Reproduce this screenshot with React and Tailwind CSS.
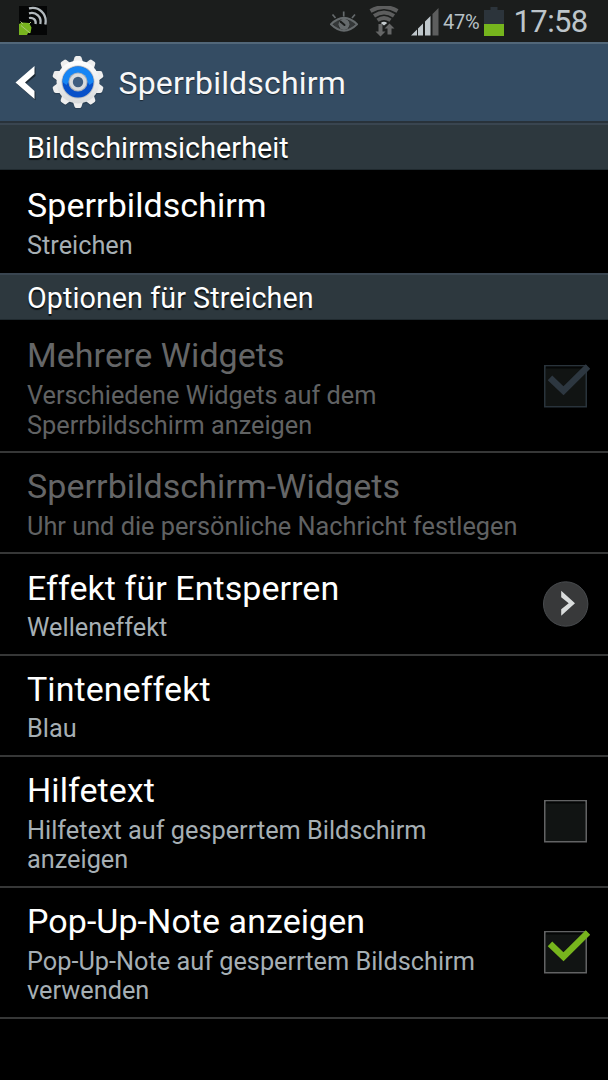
import React from "react";

function SharingIcon() {
  return (
    <svg className="ml-[18px] block h-[30px] w-[30px]" viewBox="0 0 30 30">
      <rect x="1" y="0" width="28" height="29" fill="#050606" />
      <g fill="none" stroke="#b2b9bd" strokeWidth="2.3">
        <path d="M11 2.4C21 0 29.5 8 27.3 18.5" />
        <path d="M11 7.3C18 5.4 24 11 22.3 18" />
        <path d="M11 12C15 11 18.5 14 17.5 18" />
      </g>
      <path d="M1 18 4 16.5l7 .5 2.500 4.500-1 5.500H10l-1 2H1z" fill="#78b51f" />
      <path d="m3 19.500 9 7.500M2.500 15.500 5 18M11 18l2-2" fill="none" stroke="#a9c67c" strokeWidth="1" />
    </svg>
  );
}

function EyeIcon() {
  return (
    <svg className="block h-[24px] w-[28px]" viewBox="0 0 28 24">
      <g fill="none" stroke="#656a6c" strokeWidth="1.700">
        <path d="M13.700 .5V5.500M2.500 3.500 5.500 7M25 3.500 22 7" />
        <path d="M1 13.300Q14 .5 27 13.300 14 26.100 1 13.300z" strokeWidth="2" />
      </g>
      <path d="M3 13.300Q6 9.500 10 8.300q-3.500 5 0 10Q6 17 3 13.300zM25 13.300Q22 9.500 18 8.300q3.500 5 0 10 4-1.300 7-5z" fill="#656a6c" opacity=".35" />
      <circle cx="14" cy="13.300" r="5.600" fill="#656a6c" />
      <path d="m10.500 10.500 4 3.500" stroke="#1b1d1c" strokeWidth="2" strokeLinecap="round" />
    </svg>
  );
}

function WifiIcon() {
  return (
    <svg className="block h-[32px] w-[30px]" viewBox="0 0 30 32">
      <g fill="none" stroke="#5d5e5e" strokeWidth="3.800">
        <path d="M1.500 5Q15-3 28.500 5" />
        <path d="M5 9.800Q15 3.300 25 9.800" />
        <path d="M8.500 14.300Q15 9.800 21.500 14.300" />
      </g>
      <path d="M11.800 17Q15 14.500 18.200 17L15 19.500z" fill="#c5cbce" />
      <path d="M9.500 18h4v7.500h3L11.500 30.500l-5-5h3zM18.500 28.500h4v-6h3L20.500 17.500l-5 5h3z" fill="#656666" />
    </svg>
  );
}

function SignalIcon() {
  return (
    <svg className="block h-[28px] w-[28px]" viewBox="0 0 28 28">
      <path d="M0 27.500 6 21.500v6zM7 20.500l5-5v12H7zM14 13.500l5.500-5.500v19.500h-5.500z" fill="#bfc7cb" />
      <path d="m21.500 6 6-6v27.500h-6z" fill="#5d5e5e" />
    </svg>
  );
}

function BatteryIcon() {
  return (
    <svg className="block h-[29px] w-[20px]" viewBox="0 0 20 29">
      <path d="M6.500 0h7v3H20v14H0V3h6.500z" fill="#2c343b" />
      <path d="M0 17h20v12H0z" fill="#76b51d" />
    </svg>
  );
}

function StatusBar() {
  return (
    <div className="flex h-[42px] bg-[#1b1d1c] pt-[6px]">
      <SharingIcon />
      <div className="ml-[282px] mt-[5px]"><EyeIcon /></div>
      <div className="ml-[11px]"><WifiIcon /></div>
      <div className="ml-[12px] mt-[2px]"><SignalIcon /></div>
      <span className="ml-[4px] mt-[4px] w-[37px] whitespace-nowrap text-[20px] leading-[25px] tracking-[-0.2px] text-[#b8c1c6]">47%</span>
      <div className="ml-[4px] mt-[1px]"><BatteryIcon /></div>
      <span className="ml-[9.500px] -mt-[3px] whitespace-nowrap text-[31px] leading-[38px] tracking-[-0.6px] text-[#bdc5ca]">17:58</span>
    </div>
  );
}

const teeth = [0, 36, 72, 108, 144, 180, 216, 252, 288, 324];

function GearIcon() {
  return (
    <svg className="block h-[54px] w-[54px]" viewBox="-27 -27 54 54">
      <defs>
        <linearGradient id="metal" x1="0" y1="0" x2="0" y2="1">
          <stop offset="0" stopColor="#fff" />
          <stop offset="1" stopColor="#d8dadb" />
        </linearGradient>
      </defs>
      <g transform="translate(0 1)" fill="#26394b" opacity=".6">
        <circle r="22" />
        {teeth.map((a) => <path key={a} d="M-4.800-20-3.300-26H3.300L4.800-20z" transform={`rotate(${a})`} />)}
      </g>
      <g fill="#eeeeee">
        {teeth.map((a) => <path key={a} d="M-5-20-3.500-24.500Q-3-26-1.800-26H1.800Q3-26 3.500-24.500L5-20z" transform={`rotate(${a})`} />)}
      </g>
      <circle r="21.500" fill="url(#metal)" />
      <circle r="16.500" fill="#b8bec4" />
      <circle r="15.500" fill="#0750c9" />
      <path d="M-15.500 0a15.500 15.500 0 0 1 31 0l-4 3Q7-5 0-5T-11.500 3z" fill="#1686f5" />
      <circle r="9.600" fill="#a8b0b7" />
      <circle r="8.500" fill="#d9dcde" />
      <circle r="5.200" fill="#3f5e80" />
    </svg>
  );
}

function ActionBar() {
  return (
    <header className="flex h-[81px] border-b-2 border-t-2 border-b-[#28323a] border-t-[#526779] bg-[#344c63]">
      <svg className="ml-[15px] mt-[22px] block h-[35px] w-[21px]" viewBox="0 0 21 35">
        <path d="M20.500 1.500v8.500L11 17.800l9.500 8v8.500L1.800 18z" fill="#1e2a35" />
        <path d="M19.500 0v8L10 16.500l9.500 8.500V33L.5 16.500z" fill="#fff" />
      </svg>
      <div className="ml-[14.5px] mt-[11px]"><GearIcon /></div>
      <h1 className="ml-[14px] mt-[19px] whitespace-nowrap text-[32px] leading-[40px] tracking-[0.18px] text-[#f7f8f9] [text-shadow:0_1px_1px_#1c2935]">Sperrbildschirm</h1>
    </header>
  );
}

function SectionHeader({ children }) {
  return (
    <h2 className="h-[47px] border-b border-t-2 border-b-[#202a2f] border-t-[#394550] bg-[#2d383e] pl-[27px] pt-[4px] text-[28.7px] leading-[38px] tracking-[0.07px] text-white [text-shadow:0_2px_1px_#0b1012]">{children}</h2>
  );
}

function CheckBox({ checked, disabled }) {
  return (
    <svg className="block h-[48px] w-[50px]" viewBox="0 0 50 48">
      <rect x="4.750" y="5.750" width="41.500" height="41" fill="#111413" stroke={disabled ? "#29333b" : "#626364"} strokeWidth="1.500" />
      <path d="M6 7.500h39" stroke="#050606" strokeWidth="2" />
      {checked && <path d="M10 17.800 23.500 30.800 48 6.500" fill="none" stroke={disabled ? "#2d3740" : "#77b51d"} strokeWidth="6.500" />}
    </svg>
  );
}

function MoreButton() {
  return (
    <svg className="block h-[48px] w-[50px]" viewBox="0 0 50 48">
      <circle cx="25.700" cy="25" r="22.200" fill="#38393a" stroke="#484b4e" strokeWidth="1" />
      <path d="M21.200 11.700v6.500l7.500 6-7.500 6v6.500L35 24.200z" fill="#dadddd" />
    </svg>
  );
}

const rows = [
  { title: "Mehrere Widgets", summary: ["Verschiedene Widgets auf dem", "Sperrbildschirm anzeigen"], disabled: true, control: "check", checked: true, size: "h-[133px]", pad: "pt-[14px]", gap: "mt-[5px]", offset: "mt-[40px]" },
  { title: "Sperrbildschirm-Widgets", summary: ["Uhr und die persönliche Nachricht festlegen"], disabled: true, size: "h-[101px]", pad: "pt-[12px]", gap: "mt-[5px]" },
  { title: "Effekt für Entsperren", summary: ["Welleneffekt"], control: "more", size: "h-[102px]", pad: "pt-[13px]", gap: "mt-[4px]", offset: "mt-[25px]" },
  { title: "Tinteneffekt", summary: ["Blau"], size: "h-[101px]", pad: "pt-[12px]", gap: "mt-[4px]" },
  { title: "Hilfetext", summary: ["Hilfetext auf gesperrtem Bildschirm", "anzeigen"], control: "check", size: "h-[131px]", pad: "pt-[12px]", gap: "mt-[4.5px]", offset: "mt-[38px]" },
  { title: "Pop-Up-Note anzeigen", summary: ["Pop-Up-Note auf gesperrtem Bildschirm", "verwenden"], control: "check", checked: true, size: "h-[131px]", pad: "pt-[12px]", gap: "mt-[4.5px]", offset: "mt-[37.5px]" },
];

function SettingRow({ title, summary, disabled, control, checked, size, pad, gap, offset, last }) {
  return (
    <div className={`${size} flex justify-between pl-[27px] pr-[18px] ${last ? "" : "border-b-2 border-[#363737]"}`}>
      <div className={pad}>
        <div className={`whitespace-nowrap text-[34px] leading-[42px] tracking-[0.06px] ${disabled ? "text-[#656667]" : "text-white"}`}>{title}</div>
        <div className={`${gap} whitespace-nowrap text-[25.3px] leading-[29.5px] ${disabled ? "text-[#606263]" : "text-[#a6afb4]"}`}>
          {summary.map((line) => <div key={line}>{line}</div>)}
        </div>
      </div>
      {control && (
        <div className={offset}>
          {control === "check" ? <CheckBox checked={checked} disabled={disabled} /> : <MoreButton />}
        </div>
      )}
    </div>
  );
}

export default function App() {
  return (
    <main className="h-[1080px] w-[608px] overflow-hidden bg-black font-[Roboto,sans-serif] font-normal">
      <StatusBar />
      <ActionBar />
      <SectionHeader>Bildschirmsicherheit</SectionHeader>
      <SettingRow title="Sperrbildschirm" summary={["Streichen"]} size="h-[103px]" pad="pt-[14px]" gap="mt-[5px]" last />
      <SectionHeader>Optionen für Streichen</SectionHeader>
      {rows.map((row) => <SettingRow key={row.title} {...row} />)}
    </main>
  );
}
